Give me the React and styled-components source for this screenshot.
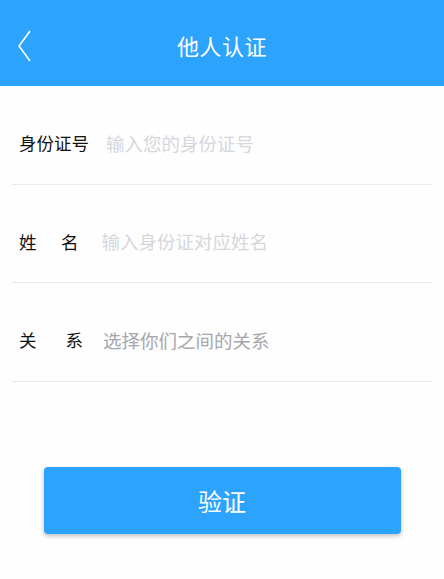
import styled, { createGlobalStyle } from "styled-components";

const Global = createGlobalStyle`
  body {
    margin: 0;
    background: #ffffff;
    font-family: "Noto Sans CJK SC", "Noto Sans", sans-serif;
  }
`;

const Page = styled.div`
  width: 444px;
  height: 579px;
  display: flex;
  flex-direction: column;
  background: #fefefe;
`;

const Header = styled.header`
  height: 86px;
  background: #2ca4fd;
  display: flex;
  align-items: center;
  justify-content: center;
  position: relative;
`;

const BackButton = styled.button`
  position: absolute;
  left: 12px;
  top: 27px;
  width: 24px;
  height: 38px;
  padding: 0;
  border: none;
  background: none;
  display: flex;
  align-items: center;
  justify-content: center;
`;

const Title = styled.h1`
  margin: 0;
  padding-top: 4px;
  font-size: 22px;
  font-weight: 400;
  color: #ffffff;
  letter-spacing: 0.5px;
`;

const Form = styled.div`
  display: flex;
  flex-direction: column;
  padding: 0 12px;
`;

const Row = styled.div`
  height: 98.5px;
  display: flex;
  align-items: center;
  padding: 16px 7px 0;
  border-bottom: 1.5px solid #e8e8ec;
  box-sizing: border-box;
`;

const Label = styled.span`
  display: inline-flex;
  gap: ${(p) => p.$spread || 0}px;
  font-size: 17.5px;
  color: #111111;
  margin-right: ${(p) => p.$gap}px;
`;

const Value = styled.span`
  font-size: 18.5px;
  color: ${(p) => (p.$dark ? "#a6a6ac" : "#d6d6dc")};
`;

const Footer = styled.div`
  flex: 1;
  display: flex;
  justify-content: center;
  padding-top: 85px;
`;

const Submit = styled.button`
  width: 357px;
  height: 67px;
  border: none;
  border-radius: 4px;
  background: #2ca4fd;
  color: #ffffff;
  font-family: inherit;
  font-size: 24px;
  box-shadow: 0 2px 4px rgba(0, 0, 0, 0.25);
`;

export default function App() {
  return (
    <>
      <Global />
      <Page>
        <Header>
          <BackButton aria-label="返回">
            <svg width="16" height="34" viewBox="0 0 16 34">
              <path d="M14 2 L3 17 L14 32" fill="none" stroke="#ffffff" strokeWidth="1.6" />
            </svg>
          </BackButton>
          <Title>他人认证</Title>
        </Header>
        <Form>
          <Row>
            <Label $gap={17}>身份证号</Label>
            <Value>输入您的身份证号</Value>
          </Row>
          <Row>
            <Label $spread={24.5} $gap={23}>
              <span>姓</span>
              <span>名</span>
            </Label>
            <Value>输入身份证对应姓名</Value>
          </Row>
          <Row>
            <Label $spread={29} $gap={20}>
              <span>关</span>
              <span>系</span>
            </Label>
            <Value $dark>选择你们之间的关系</Value>
          </Row>
        </Form>
        <Footer>
          <div>
            <Submit>验证</Submit>
          </div>
        </Footer>
      </Page>
    </>
  );
}
